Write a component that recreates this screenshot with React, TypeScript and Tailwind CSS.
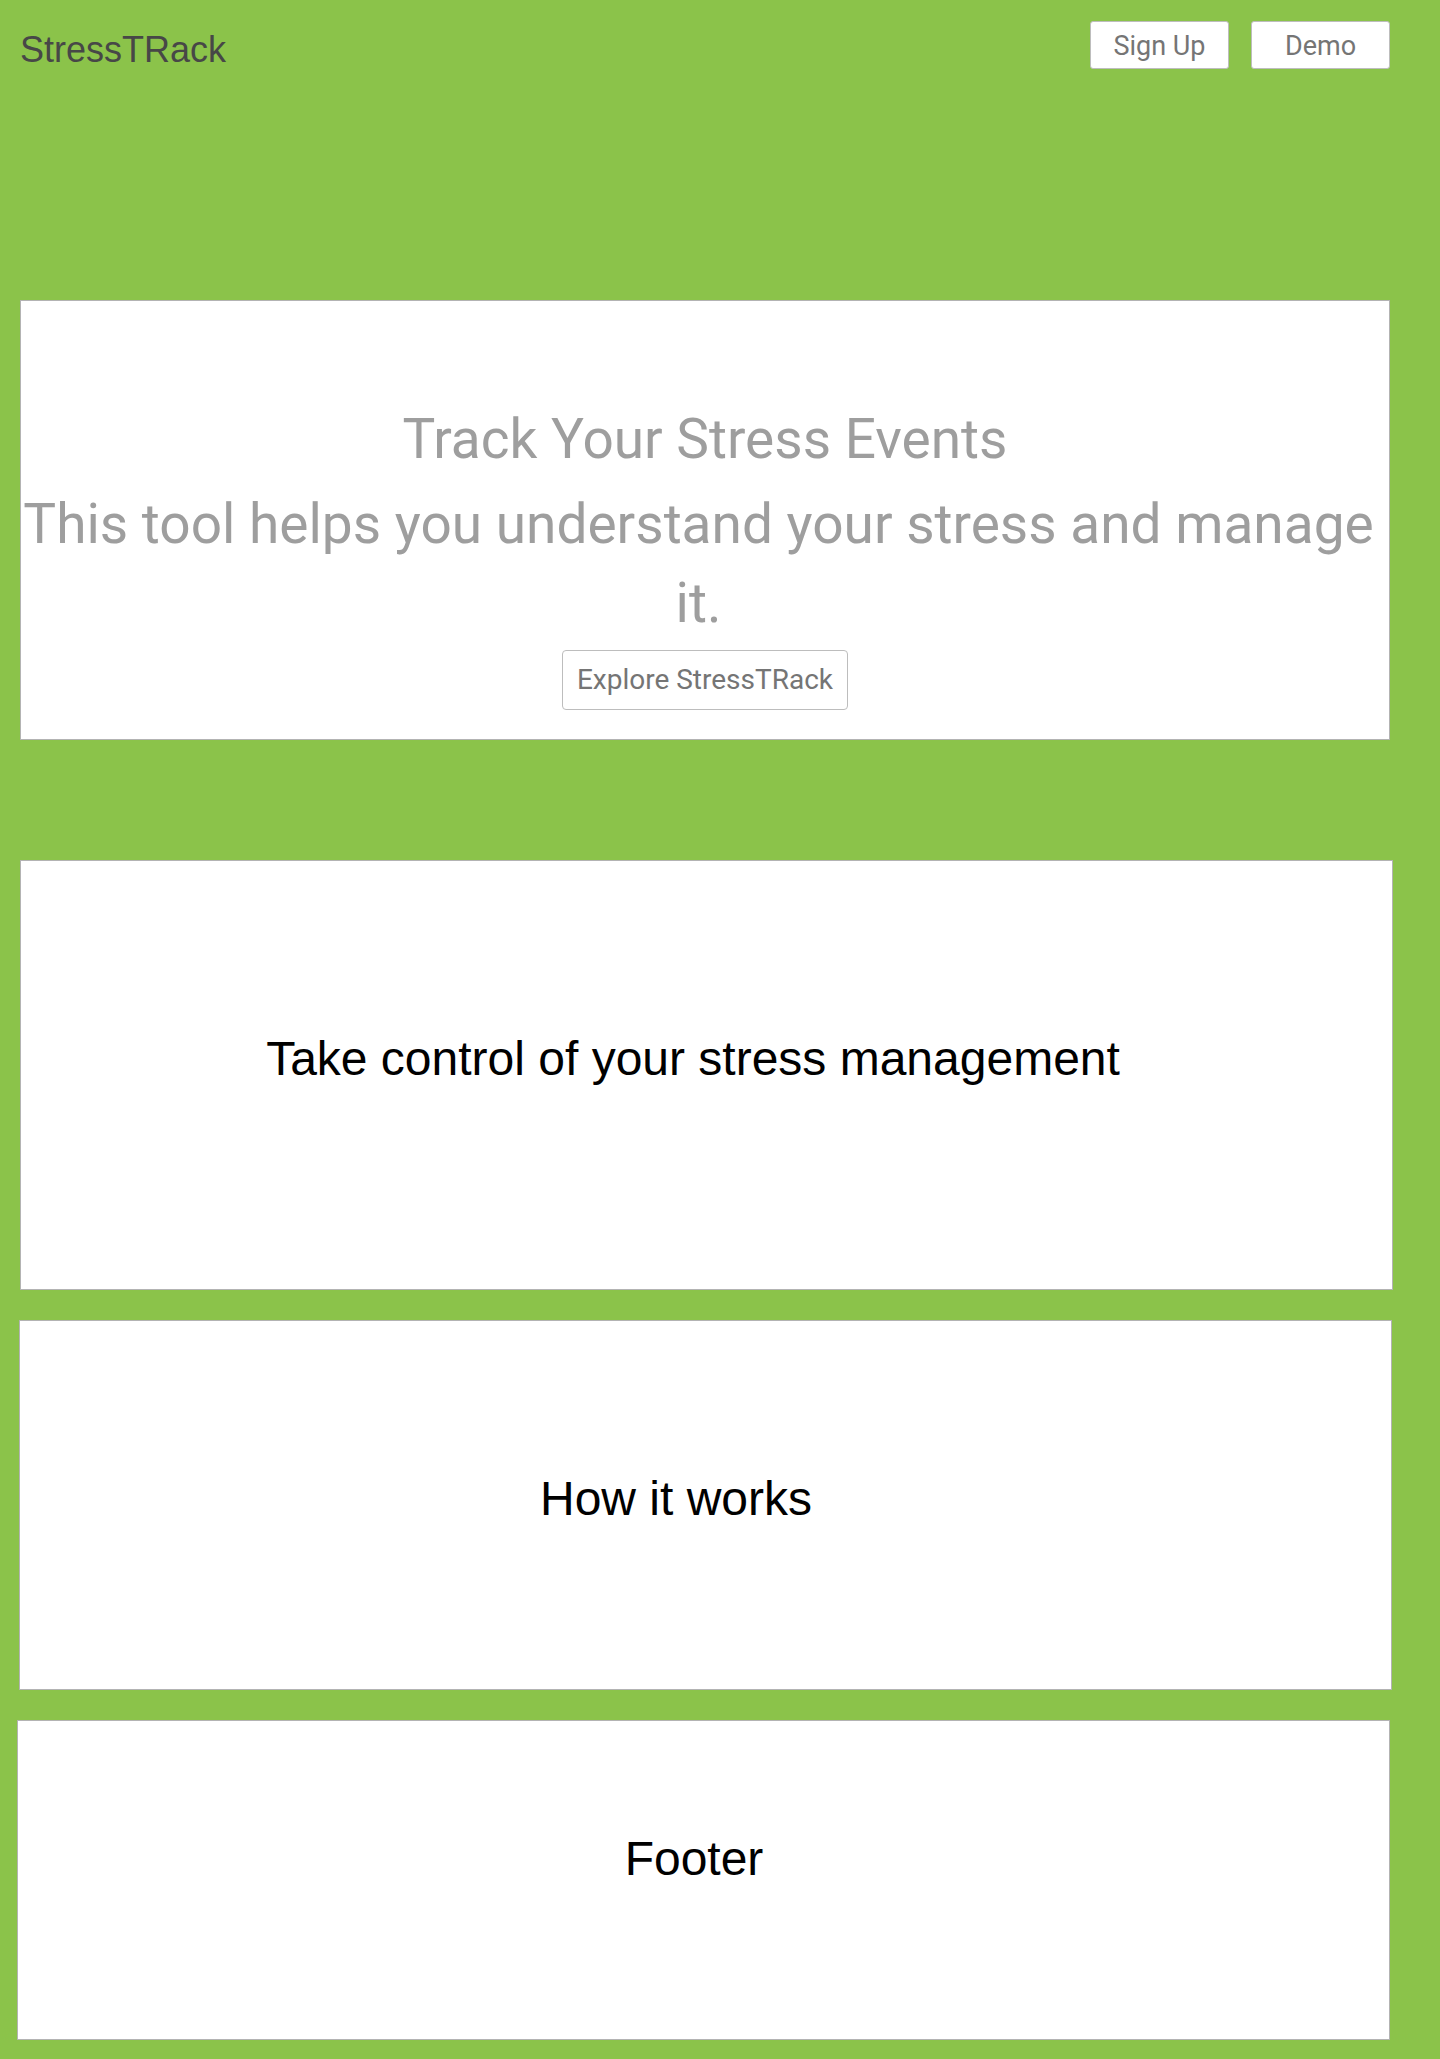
import React from "react";

const navButton =
  "w-[139px] h-[48px] bg-white border border-[#bdbdbd] rounded-[3px] text-[27px] text-[#757575] font-['Roboto',sans-serif] leading-none pt-[2px]";

const cardBox =
  "bg-white border border-[#b3b3b3] text-[48px] leading-[55px] text-black text-center font-['Liberation_Sans',Arial,sans-serif]";

export default function App() {
  return (
    <div className="min-h-screen bg-[#8bc34a] pb-[19px]">
      <header className="ml-[20px] w-[1370px] flex justify-between items-start pt-[21px]">
        <span className="mt-[8px] text-[36px] leading-[41px] text-[#474747] font-['Liberation_Sans',Arial,sans-serif]">
          StressTRack
        </span>
        <div className="flex gap-[22px]">
          <button className={navButton}>Sign Up</button>
          <button className={navButton}>Demo</button>
        </div>
      </header>

      <section className="ml-[20px] mt-[230px] w-[1370px] h-[440px] bg-white border border-[#b3b3b3] pt-[99px] flex flex-col items-center text-center font-['Roboto',sans-serif] text-[#9e9e9e]">
        <h1 className="text-[55px] leading-[79px] font-normal">Track Your Stress Events</h1>
        <p className="mt-[6px] pr-[13px] text-[55px] leading-[79px] font-normal">
          This tool helps you understand your stress and manage it.
        </p>
        <button className="mt-[7px] h-[60px] px-[14px] bg-white border border-[#bdbdbd] rounded-[4px] text-[28px] text-[#757575] leading-none">
          Explore StressTRack
        </button>
      </section>

      <section className={`ml-[20px] mt-[120px] w-[1373px] h-[430px] pt-[170px] pr-[27px] ${cardBox}`}>
        Take control of your stress management
      </section>

      <section className={`ml-[19px] mt-[30px] w-[1373px] h-[370px] pt-[150px] pr-[59px] ${cardBox}`}>
        How it works
      </section>

      <footer className={`ml-[17px] mt-[30px] w-[1373px] h-[320px] pt-[110px] pr-[19px] ${cardBox}`}>
        Footer
      </footer>
    </div>
  );
}
